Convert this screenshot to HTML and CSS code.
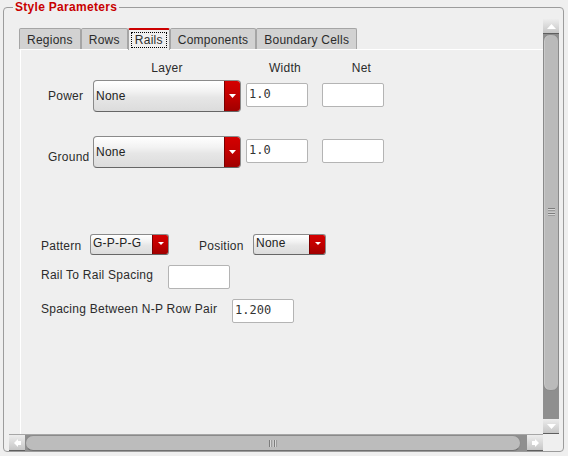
FILE: index.html
```html
<!DOCTYPE html>
<html>
<head>
<meta charset="utf-8">
<title>Style Parameters</title>
<link rel="stylesheet" href="styles.css">
</head>
<body>
<fieldset class="group">
  <legend class="legend">Style Parameters</legend>
  <div class="scroll">
    <div class="viewport">
      <div class="tabs">
        <div class="tabbar">
          <div class="tab">Regions</div>
          <div class="tab">Rows</div>
          <div class="tab active"><span class="focus">Rails</span></div>
          <div class="tab">Components</div>
          <div class="tab">Boundary Cells</div>
        </div>
        <div class="panel">
          <div class="rail-row head-row">
            <div></div>
            <div class="col-head">Layer</div>
            <div class="col-head shifted">Width</div>
            <div class="col-head shifted net-col">Net</div>
          </div>
          <div class="rail-row power-row">
            <div class="row-label mid">Power</div>
            <div class="combo combo-lg">
              <span class="combo-text">None</span>
              <span class="combo-btn"><svg width="7" height="4" viewBox="0 0 7 4"><polygon points="0,0 7,0 3.5,4" fill="#fff"/></svg></span>
            </div>
            <div class="field">1.0</div>
            <div class="field net-col"></div>
          </div>
          <div class="rail-row ground-row">
            <div class="row-label low">Ground</div>
            <div class="combo combo-lg">
              <span class="combo-text">None</span>
              <span class="combo-btn"><svg width="7" height="4" viewBox="0 0 7 4"><polygon points="0,0 7,0 3.5,4" fill="#fff"/></svg></span>
            </div>
            <div class="field">1.0</div>
            <div class="field net-col"></div>
          </div>

          <div class="opt-row pattern-row">
            <span class="opt-label lbl-pattern">Pattern</span>
            <div class="combo combo-sm combo-pattern">
              <span class="combo-text">G-P-P-G</span>
              <span class="combo-btn"><svg width="6" height="3" viewBox="0 0 6 3"><polygon points="0,0 6,0 3,3" fill="#fff"/></svg></span>
            </div>
            <span class="opt-label lbl-position">Position</span>
            <div class="combo combo-sm combo-position">
              <span class="combo-text">None</span>
              <span class="combo-btn"><svg width="6" height="3" viewBox="0 0 6 3"><polygon points="0,0 6,0 3,3" fill="#fff"/></svg></span>
            </div>
          </div>
          <div class="opt-row field-row">
            <span class="opt-label lbl-rail">Rail To Rail Spacing</span>
            <div class="field"></div>
          </div>
          <div class="opt-row field-row">
            <span class="opt-label lbl-np">Spacing Between N-P Row Pair</span>
            <div class="field">1.200</div>
          </div>
        </div>
      </div>
    </div>

    <div class="vscroll">
      <div class="sb-btn">
        <svg width="9" height="5" viewBox="0 0 9 5"><polygon points="0,5 4.5,0 9,5" fill="#fff"/></svg>
      </div>
      <div class="vthumb">
        <svg width="7" height="9" viewBox="0 0 7 9">
          <g fill="#7c7c7c"><rect y="0" width="7" height="1"/><rect y="2.5" width="7" height="1"/><rect y="5" width="7" height="1"/><rect y="7.5" width="7" height="1"/></g>
          <g fill="#d8d8d8"><rect y="1" width="7" height="1"/><rect y="3.5" width="7" height="1"/><rect y="6" width="7" height="1"/><rect y="8.5" width="7" height="0.5"/></g>
        </svg>
      </div>
      <div class="vtrack"></div>
      <div class="sb-btn">
        <svg width="9" height="5" viewBox="0 0 9 5"><polygon points="0,0 9,0 4.5,5" fill="#fff"/></svg>
      </div>
    </div>

    <div class="hscroll">
      <div class="sb-btn hbtn">
        <svg width="7" height="8" viewBox="0 0 7 8"><polygon points="0,4 4,0 4,2 7,2 7,6 4,6 4,8" fill="#fff"/></svg>
      </div>
      <div class="hthumb">
        <svg width="9" height="7" viewBox="0 0 9 7">
          <g fill="#7c7c7c"><rect x="0" width="1" height="7"/><rect x="2.5" width="1" height="7"/><rect x="5" width="1" height="7"/><rect x="7.5" width="1" height="7"/></g>
          <g fill="#d8d8d8"><rect x="1" width="1" height="7"/><rect x="3.5" width="1" height="7"/><rect x="6" width="1" height="7"/><rect x="8.5" width="0.5" height="7"/></g>
        </svg>
      </div>
      <div class="htrack"></div>
      <div class="sb-btn hbtn">
        <svg width="7" height="8" viewBox="0 0 7 8"><polygon points="7,4 3,0 3,2 0,2 0,6 3,6 3,8" fill="#fff"/></svg>
      </div>
    </div>
    <div class="corner"></div>
  </div>
</fieldset>
</body>
</html>
```

FILE: styles.css
```css
* { box-sizing: border-box; }

html, body { margin: 0; padding: 0; }

body {
  width: 568px;
  height: 456px;
  overflow: hidden;
  background: #efefef;
  font-family: "Liberation Sans", Arial, sans-serif;
  font-size: 12px;
  line-height: 14px;
  letter-spacing: 0.25px;
  color: #2b2b2b;
}

/* ---------- group box ---------- */
.group {
  margin: 0 4px 0 3px;
  padding: 4px 4px 0 5px;
  border: 1px solid #9c9c9c;
  border-radius: 4px;
  min-width: 0;
}

.legend {
  margin-left: 4px;
  padding: 0 2px;
  font-weight: bold;
  color: #c80000;
  line-height: 15px;
  letter-spacing: 0.3px;
}

/* ---------- scroll area ---------- */
.scroll {
  display: grid;
  grid-template-columns: 1fr 16px;
  grid-template-rows: 415px 17px;
}

.viewport { overflow: hidden; }

.tabs {
  margin: 9px 0 0 10px;
  width: 560px;
}

.tabbar {
  display: flex;
  align-items: flex-end;
  height: 21px;
}

.tab {
  height: 21px;
  padding: 4px 7px 0;
  border: 1px solid #a5a5a5;
  border-bottom: 0;
  border-radius: 2px 2px 0 0;
  background: #d2d2d2;
  white-space: nowrap;
}

.tab.active {
  position: relative;
  z-index: 1;
  height: 22px;
  margin-bottom: -1px;
  padding: 3px 3px 0;
  border-top: 2px solid #cc0000;
  background: #efefef;
}

.focus {
  padding: 0 3px;
  outline: 1px dotted #000;
}

.panel {
  margin-left: 1px;
  height: 400px;
  border-top: 1px solid #fff;
  border-left: 1px solid #fff;
  background: #efefef;
}

/* ---------- power / ground grid ---------- */
.rail-row {
  display: grid;
  grid-template-columns: 40px 148px 62px 62px;
  column-gap: 5px;
  padding-left: 27px;
}

.net-col { margin-left: 9px; }

.head-row { margin-top: 11px; }
.power-row { margin-top: 5px; height: 32px; }
.ground-row { margin-top: 24px; height: 32px; }

.col-head { text-align: center; }
.col-head.shifted { padding-left: 16px; }
.col-head.net-col { padding-left: 26px; }

.row-label { white-space: nowrap; }
.row-label.mid { align-self: center; }
.row-label.low { align-self: end; padding-bottom: 4px; }

/* ---------- combo boxes ---------- */
.combo {
  display: flex;
  border: 1px solid #8a8a8a;
  border-bottom-color: #666;
  border-radius: 4px;
  background: linear-gradient(#ffffff 0%, #f2f2f2 35%, #e6e6e6 55%, #dcdcdc 100%);
  overflow: hidden;
  color: #222;
}

.combo-text {
  flex: 1;
  padding-left: 2px;
  white-space: nowrap;
}

.combo-btn {
  flex: none;
  width: 16px;
  display: flex;
  justify-content: center;
  background: linear-gradient(#d40000 0%, #bf0000 55%, #a00000 100%);
  border-left: 1px solid #7a0000;
}

.combo-lg { height: 32px; }
.combo-lg .combo-text { align-self: center; }
.combo-lg .combo-btn { align-items: center; }

.combo-sm { height: 21px; border-radius: 3px; }
.combo-sm .combo-text { padding-top: 1px; }
.combo-sm .combo-btn { align-items: flex-start; padding-top: 7px; width: 16px; }

.combo-pattern { width: 79px; }
.combo-position { width: 73px; }

/* ---------- text fields ---------- */
.field {
  align-self: start;
  width: 62px;
  height: 24px;
  margin-top: 3px;
  padding: 3px 2px;
  border: 1px solid #b4b4b4;
  border-radius: 2px;
  background: #fff;
  font-family: "DejaVu Sans Mono", "Liberation Mono", monospace;
  letter-spacing: 0;
  color: #333;
}

.opt-row .field { margin-top: 0; }

/* ---------- lower options ---------- */
.opt-row {
  display: flex;
  align-items: flex-start;
  padding-left: 20px;
}

.pattern-row { margin-top: 66px; height: 21px; }
.field-row { margin-top: 10px; }

.opt-label { white-space: nowrap; padding-top: 3px; }
.pattern-row .opt-label { padding-top: 5px; }

.lbl-pattern { width: 49px; }
.lbl-position { width: 54px; margin-left: 30px; }
.lbl-rail { width: 127px; }
.lbl-np { width: 191px; }

/* ---------- scrollbars ---------- */
.sb-btn {
  flex: none;
  display: flex;
  align-items: center;
  justify-content: center;
  background: linear-gradient(#ededed, #c6c6c6);
  border-bottom: 1px solid #5e5e5e;
}

.vscroll {
  display: flex;
  flex-direction: column;
  background: #8f8f8f;
}

.vscroll .sb-btn { height: 15px; }

.vthumb {
  flex: none;
  height: 357px;
  display: flex;
  align-items: center;
  justify-content: center;
  border: 1px solid #8a8a8a;
  border-radius: 7px;
  background: #bababa;
  box-shadow: inset 1px 0 0 #c9c9c9;
}

.vtrack { flex: 1; }

.hscroll {
  display: flex;
  background: #8f8f8f;
  border-top: 1px solid #a6a6a6;
}

.hbtn { width: 16px; }

.hthumb {
  flex: none;
  width: 496px;
  display: flex;
  align-items: center;
  justify-content: center;
  border: 1px solid #8a8a8a;
  border-bottom-color: #6f6f6f;
  border-radius: 8px;
  background: #bcbcbc;
}

.htrack { flex: 1; }

.corner { background: #efefef; }
```
